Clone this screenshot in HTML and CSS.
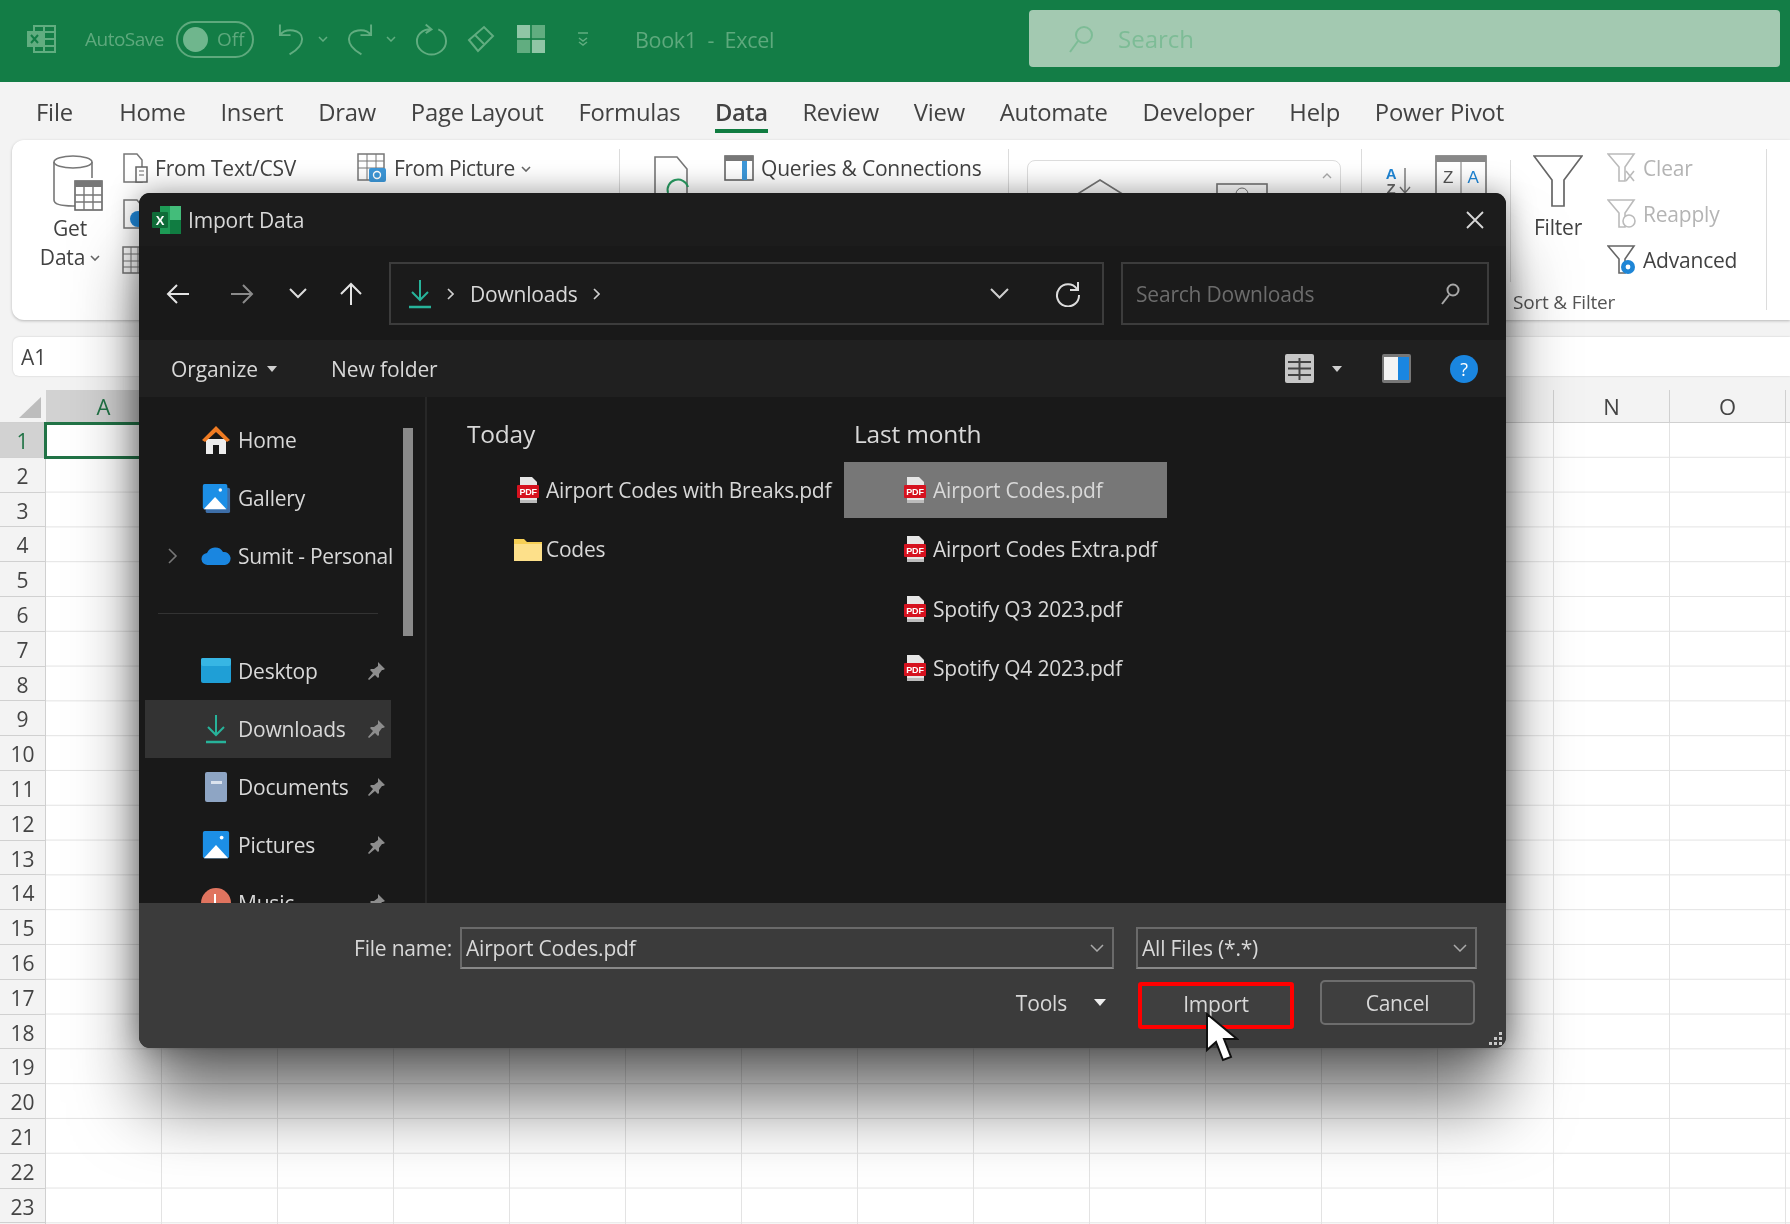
FILE: index.html
```html
<!DOCTYPE html>
<html>
<head>
<meta charset="utf-8">
<title>Book1 - Excel</title>
<link rel="stylesheet" href="styles.css">
</head>
<body>
<svg class="defs" width="0" height="0">
  <symbol id="pdf" viewBox="0 0 22 26">
    <path d="M3 0h12l5 5v21H3z" fill="#e6e6e6"/>
    <rect x="3" y="23" width="17" height="3" fill="#bbb"/>
    <rect x="0" y="8" width="22" height="13" rx="1" fill="#d6121f"/>
    <text x="11" y="18" text-anchor="middle" class="pdf-label">PDF</text>
  </symbol>
  <symbol id="pin" viewBox="0 0 20 20">
    <path d="M12 1l7 7-2 1-1 0-3 4 0 3-1 1-3-3-6 5-1-1 5-6-3-3 1-1 3 0 4-3 0-1z" fill="#8d8d8d"/>
  </symbol>
  <symbol id="tile" viewBox="0 0 30 32">
    <rect x="1" y="1" width="28" height="29" rx="2" fill="#1c8fe6"/>
    <path d="M2 30l13-14 13 14z" fill="#fff"/>
    <circle cx="21" cy="8" r="2" fill="#fff"/>
  </symbol>
  <symbol id="chev" viewBox="0 0 10 6">
    <path d="M1 1l4 4 4-4" fill="none" stroke="#666" stroke-width="1.6"/>
  </symbol>
</svg>

<div class="app">
  <!-- green title bar -->
  <div class="titlebar">
    <svg class="t-excel" viewBox="0 0 30 30" width="30" height="30"><rect x="8" y="2" width="21" height="26" fill="none" stroke="#61ad80" stroke-width="2"/><path d="M8 8h21M8 15h21M8 22h21M18 2v26" stroke="#61ad80" stroke-width="2"/><rect x="1" y="7" width="16" height="16" fill="#61ad80"/><path d="M5 11l7 8M12 11l-7 8" stroke="#137d46" stroke-width="2"/></svg>
    <span class="t-autosave">AutoSave</span>
    <span class="toggle"><i></i><span>Off</span></span>
    <svg class="t-undo" viewBox="0 0 28 36" width="27" height="36"><path d="M2 3v11h11M2 14C8 6 25 8 25 18c0 6-6 12-13 16" fill="none" stroke="#61ad80" stroke-width="2"/></svg>
    <svg class="t-chev" viewBox="0 0 10 6" width="10" height="6"><path d="M1 1l4 4 4-4" fill="none" stroke="#61ad80" stroke-width="1.5"/></svg>
    <svg class="t-redo" viewBox="0 0 28 36" width="27" height="36"><path d="M26 3v11H15M26 14C20 6 3 8 3 18c0 6 6 12 13 16" fill="none" stroke="#61ad80" stroke-width="2"/></svg>
    <svg class="t-chev" viewBox="0 0 10 6" width="10" height="6"><path d="M1 1l4 4 4-4" fill="none" stroke="#61ad80" stroke-width="1.5"/></svg>
    <svg class="t-repeat" viewBox="0 0 34 36" width="33" height="36"><path d="M11 3l6 5-6 4M16 8C7 8 2 14 2 20c0 8 7 14 15 14s15-6 15-14c0-5-3-10-8-12" fill="none" stroke="#61ad80" stroke-width="2"/></svg>
    <svg class="t-eraser" viewBox="0 0 28 28" width="28" height="28"><path d="M2 15L17 2l9 9-15 15z" fill="none" stroke="#61ad80" stroke-width="2"/><path d="M8 10l9 9" stroke="#61ad80" stroke-width="2"/></svg>
    <svg class="t-form" viewBox="0 0 28 28" width="28" height="28"><rect width="28" height="28" fill="#61ad80"/><path d="M14 0v28M0 14h28" stroke="#137d46" stroke-width="1.5"/><rect width="13" height="13" fill="#8fc6a6"/><rect x="15" y="15" width="13" height="13" fill="#8fc6a6"/></svg>
    <svg class="t-qat" viewBox="0 0 12 14" width="12" height="14"><path d="M1 1h10M2 6l4 3 4-3M2 10l4 3 4-3" fill="none" stroke="#61ad80" stroke-width="1.5"/></svg>
    <span class="t-name">Book1 &nbsp;-&nbsp; Excel</span>
    <div class="t-search">
      <svg viewBox="0 0 26 30" width="26" height="30"><circle cx="16" cy="11" r="8" fill="none" stroke="#7dbc96" stroke-width="2"/><path d="M10 17L2 28" stroke="#7dbc96" stroke-width="2"/></svg>
      <span>Search</span>
    </div>
  </div>

  <!-- tabs -->
  <div class="tabs">
    <span class="tab">File</span>
    <span class="tab tab-home">Home</span>
    <span class="tab">Insert</span>
    <span class="tab">Draw</span>
    <span class="tab">Page Layout</span>
    <span class="tab">Formulas</span>
    <span class="tab active">Data</span>
    <span class="tab">Review</span>
    <span class="tab">View</span>
    <span class="tab">Automate</span>
    <span class="tab">Developer</span>
    <span class="tab">Help</span>
    <span class="tab">Power Pivot</span>
  </div>

  <!-- ribbon -->
  <div class="ribbon">
    <div class="rgroup rg-get">
      <div class="big-btn getdata">
        <svg viewBox="0 0 50 56" width="50" height="56"><ellipse cx="20" cy="7" rx="19" ry="6" fill="#fff" stroke="#777" stroke-width="1.6"/><path d="M1 7v38c0 4 8 6 19 6h6M39 7v16" fill="none" stroke="#777" stroke-width="1.6"/><rect x="22" y="26" width="27" height="29" fill="#fff" stroke="#666" stroke-width="1.6"/><rect x="22" y="26" width="27" height="6" fill="#777"/><path d="M22 40h27M22 47h27M31 32v23M40 32v23" stroke="#777" stroke-width="1.4"/></svg>
        <span>Get</span>
        <span class="get-line">Data <svg class="chev-s" width="10" height="6"><use href="#chev"/></svg></span>
      </div>
      <div class="small-col c1">
        <div class="small"><svg viewBox="0 0 26 30" width="26" height="30"><path d="M2 1h13l5 6v22H2z" fill="#fff" stroke="#777" stroke-width="1.5"/><rect x="14" y="14" width="11" height="15" fill="#fff" stroke="#666" stroke-width="1.5"/><path d="M17 18h5M17 22h5" stroke="#666"/></svg>From Text/CSV</div>
        <div class="small"><svg viewBox="0 0 26 30" width="26" height="30"><path d="M2 1h13l5 6v22H2z" fill="#fff" stroke="#777" stroke-width="1.5"/><circle cx="16" cy="20" r="8" fill="#1f86d6"/></svg></div>
        <div class="small"><svg viewBox="0 0 26 30" width="26" height="30"><rect x="1" y="2" width="22" height="26" fill="#fff" stroke="#777" stroke-width="1.5"/><path d="M1 9h22M1 16h22M1 22h22M9 2v26M16 2v26" stroke="#777"/></svg></div>
      </div>
      <div class="small-col c2">
        <div class="small"><svg viewBox="0 0 30 30" width="30" height="30"><rect x="1" y="1" width="26" height="26" fill="#fff" stroke="#777" stroke-width="1.5"/><path d="M1 8h26M1 15h26M10 1v26M19 1v26" stroke="#777"/><rect x="12" y="15" width="17" height="14" rx="2" fill="#3d97d8"/><circle cx="20" cy="22" r="3.5" fill="none" stroke="#fff" stroke-width="1.4"/></svg><span class="narrow">From Picture</span><svg class="chev-s" width="10" height="6"><use href="#chev"/></svg></div>
      </div>
    </div>
    <div class="rgroup rg-query">
      <svg class="q-big" viewBox="0 0 42 42" width="42" height="42"><path d="M1 2h22l10 12v26H1z" fill="#fff" stroke="#777" stroke-width="1.6"/><path d="M14 38a10 10 0 0 1 20-6" fill="none" stroke="#2a9d63" stroke-width="2"/></svg>
      <div class="small-col">
        <div class="small"><svg viewBox="0 0 30 26" width="30" height="26"><rect x="1" y="1" width="28" height="24" fill="#fff" stroke="#666" stroke-width="1.6"/><rect x="1" y="1" width="28" height="5" fill="#777"/><rect x="18" y="6" width="5" height="19" fill="#3d97d8"/></svg>Queries &amp; Connections</div>
      </div>
    </div>
    <div class="rgroup rg-types">
      <div class="types-box">
        <svg class="ty-bank" viewBox="0 0 50 16" width="50" height="16"><path d="M1 16L25 1l24 15" fill="none" stroke="#777" stroke-width="1.6"/></svg>
        <svg class="ty-money" viewBox="0 0 52 12" width="52" height="12"><rect x="1" y="1" width="50" height="20" fill="none" stroke="#777" stroke-width="1.6"/><circle cx="26" cy="11" r="6" fill="none" stroke="#777"/></svg>
        <svg class="ty-caret" viewBox="0 0 10 6" width="10" height="6"><path d="M1 5l4-4 4 4" fill="none" stroke="#aaa" stroke-width="1.4"/></svg>
      </div>
    </div>
    <div class="rgroup rg-sort">
      <div class="sort-top">
        <svg class="az" viewBox="0 0 30 28" width="30" height="28"><text x="7" y="12" class="az-a">A</text><text x="7" y="27" class="az-z">Z</text><path d="M21 1v25M16 20l5 6 5-6" fill="none" stroke="#777" stroke-width="1.4"/></svg>
        <svg class="sort-big" viewBox="0 0 52 40" width="52" height="40"><rect x="1" y="1" width="50" height="50" fill="#fff" stroke="#777" stroke-width="1.6"/><rect x="1" y="1" width="50" height="6" fill="#888"/><path d="M26 7v40" stroke="#777"/><text x="13" y="28" class="sort-z">Z</text><text x="38" y="28" class="sort-a">A</text></svg>
        <div class="sort-sep"></div>
        <div class="big-btn filter">
          <svg viewBox="0 0 50 52" width="50" height="52"><path d="M1 1h48L31 25v26H19V25z" fill="#fff" stroke="#666" stroke-width="1.7"/></svg>
          <span>Filter</span>
        </div>
        <div class="small-col c3">
          <div class="small dim"><svg viewBox="0 0 30 30" width="30" height="30"><path d="M1 1h26L18 14v14h-6V14z" fill="#fff" stroke="#bbb" stroke-width="1.6"/><path d="M19 18l8 10M27 18l-8 10" stroke="#bbb" stroke-width="1.6"/></svg>Clear</div>
          <div class="small dim"><svg viewBox="0 0 30 30" width="30" height="30"><path d="M1 1h26L18 14v14h-6V14z" fill="#fff" stroke="#bbb" stroke-width="1.6"/><circle cx="22" cy="22" r="6" fill="#fff" stroke="#bbb" stroke-width="1.6"/></svg>Reapply</div>
          <div class="small"><svg viewBox="0 0 30 30" width="30" height="30"><path d="M1 1h26L18 14v14h-6V14z" fill="#fff" stroke="#666" stroke-width="1.6"/><circle cx="21" cy="22" r="7" fill="#1f86d6"/><circle cx="21" cy="22" r="2.4" fill="#fff"/></svg>Advanced</div>
        </div>
      </div>
      <div class="rg-label">Sort &amp; Filter</div>
    </div>
  </div>

  <!-- name box and formula bar -->
  <div class="formula"><span class="namebox">A1</span></div>

  <!-- sheet -->
  <div class="sheet">
    <div class="col-head">
      <span class="corner"><svg viewBox="0 0 22 21" width="22" height="21"><path d="M22 0v21H0z" fill="#bdbdbd"/></svg></span>
      <span class="ch sel">A</span><span class="ch"></span><span class="ch"></span><span class="ch"></span><span class="ch"></span><span class="ch"></span><span class="ch"></span><span class="ch"></span><span class="ch"></span><span class="ch"></span><span class="ch"></span><span class="ch"></span><span class="ch"></span><span class="ch">N</span><span class="ch">O</span>
    </div>
    <div class="sheet-body">
      <div class="row-head">
        <span class="sel">1</span><span>2</span><span>3</span><span>4</span><span>5</span><span>6</span><span>7</span><span>8</span><span>9</span><span>10</span><span>11</span><span>12</span><span>13</span><span>14</span><span>15</span><span>16</span><span>17</span><span>18</span><span>19</span><span>20</span><span>21</span><span>22</span><span>23</span>
      </div>
      <div class="cells"><div class="active-cell"></div></div>
    </div>
  </div>

  <!-- file dialog -->
  <div class="dialog">
    <div class="d-title">
      <svg viewBox="0 0 30 28" width="30" height="28"><rect x="8" y="0" width="21" height="28" fill="#1d9a55"/><rect x="18" y="0" width="11" height="14" fill="#43bd7a"/><rect x="18" y="14" width="11" height="14" fill="#107c41"/><rect x="0" y="6" width="16" height="16" rx="1" fill="#0f6b38"/><text x="8" y="19" text-anchor="middle" class="x-label">X</text></svg>
      <span>Import Data</span>
      <svg class="d-close" viewBox="0 0 18 18" width="18" height="18"><path d="M1 1l16 16M17 1L1 17" stroke="#d8d8d8" stroke-width="1.8"/></svg>
    </div>

    <div class="d-nav">
      <span class="nb nb-wide"><svg viewBox="0 0 24 22" width="24" height="22"><path d="M23 11H2M11 2l-9 9 9 9" fill="none" stroke="#e4e4e4" stroke-width="2"/></svg></span>
      <span class="nb nb-wide"><svg viewBox="0 0 24 22" width="24" height="22"><path d="M1 11h21M13 2l9 9-9 9" fill="none" stroke="#8b8b8b" stroke-width="2"/></svg></span>
      <span class="nb nb-chev"><svg viewBox="0 0 18 11" width="18" height="11"><path d="M1 1l8 8 8-8" fill="none" stroke="#dcdcdc" stroke-width="2"/></svg></span>
      <span class="nb nb-up"><svg viewBox="0 0 24 24" width="24" height="24"><path d="M12 23V2M2 12L12 2l10 10" fill="none" stroke="#e4e4e4" stroke-width="2"/></svg></span>
      <div class="address">
        <svg viewBox="0 0 22 30" width="22" height="30"><path d="M11 1v20M3 13l8 8 8-8" fill="none" stroke="#27b39a" stroke-width="2"/><path d="M0 28h22" stroke="#27b39a" stroke-width="2.6"/></svg>
        <svg class="crumb" viewBox="0 0 7 12" width="7" height="12"><path d="M1 1l5 5-5 5" fill="none" stroke="#cfcfcf" stroke-width="1.6"/></svg>
        <span>Downloads</span>
        <svg class="crumb" viewBox="0 0 7 12" width="7" height="12"><path d="M1 1l5 5-5 5" fill="none" stroke="#cfcfcf" stroke-width="1.6"/></svg>
        <svg class="addr-drop" viewBox="0 0 19 11" width="19" height="11"><path d="M1 1l8.500 8.500L18 1" fill="none" stroke="#cfcfcf" stroke-width="2"/></svg>
        <svg class="addr-refresh" viewBox="0 0 26 26" width="26" height="26"><path d="M22 8A11 11 0 1 0 24 14" fill="none" stroke="#dcdcdc" stroke-width="2"/><path d="M23 1v8h-8" fill="none" stroke="#dcdcdc" stroke-width="2"/></svg>
      </div>
      <div class="d-search">
        <span>Search Downloads</span>
        <svg viewBox="0 0 20 22" width="20" height="22"><circle cx="13" cy="7" r="5.500" fill="none" stroke="#a8a8a8" stroke-width="2"/><path d="M9 12l-7 9" stroke="#a8a8a8" stroke-width="2"/></svg>
      </div>
    </div>

    <div class="d-tools">
      <span class="tool-text">Organize</span><i class="caret"></i>
      <span class="tool-text new-folder">New folder</span>
      <svg class="view-icon" viewBox="0 0 29 29" width="29" height="29"><rect width="29" height="29" rx="2" fill="#c6c6c6"/><path d="M3 8h23M3 14.500h23M3 21h23M14.500 4v22" stroke="#444" stroke-width="2"/></svg>
      <i class="caret view-caret"></i>
      <svg class="pane-icon" viewBox="0 0 29 29" width="29" height="29"><rect width="29" height="29" rx="2" fill="#777"/><rect x="2" y="3" width="25" height="23" fill="#f4f4f4"/><rect x="16" y="3" width="11" height="23" fill="#1a86e0"/></svg>
      <span class="help">?</span>
    </div>

    <div class="d-body">
      <div class="side">
        <div class="side-list">
          <div class="side-row"><span class="twist"></span>
            <svg class="side-ic" viewBox="0 0 30 30" width="30" height="30"><path d="M5 14v15h7v-9h6v9h7V14z" fill="#ededed"/><path d="M15 1L1 15l3 2L15 7l11 10 3-2z" fill="#ef7b22"/></svg>
            <span>Home</span></div>
          <div class="side-row"><span class="twist"></span>
            <svg class="side-ic" viewBox="0 0 30 32" width="30" height="30"><rect x="4" y="5" width="26" height="27" rx="2" fill="#3d6ea8"/><use href="#tile" width="28" height="30"/></svg>
            <span>Gallery</span></div>
          <div class="side-row"><span class="twist"><svg viewBox="0 0 10 16" width="10" height="16"><path d="M1 1l7 7-7 7" fill="none" stroke="#777" stroke-width="1.6"/></svg></span>
            <svg class="side-ic" viewBox="0 0 30 20" width="30" height="20"><path d="M7 19a6 6 0 0 1-1-12A9 9 0 0 1 22 6a6.500 6.500 0 0 1 2 13z" fill="#1a86e0"/></svg>
            <span class="tight">Sumit - Personal</span></div>
          <div class="side-div"></div>
          <div class="side-row"><span class="twist"></span>
            <svg class="side-ic" viewBox="0 0 30 26" width="30" height="26"><rect width="30" height="25" rx="2" fill="#1f9fd6"/><rect width="30" height="8" rx="2" fill="#37b6e4"/></svg>
            <span>Desktop</span><svg class="pin" width="20" height="20"><use href="#pin"/></svg></div>
          <div class="side-row on"><span class="twist"></span>
            <svg class="side-ic" viewBox="0 0 22 30" width="22" height="30"><path d="M11 1v20M3 13l8 8 8-8" fill="none" stroke="#27b39a" stroke-width="2"/><path d="M1 28h20" stroke="#27b39a" stroke-width="2.6"/></svg>
            <span>Downloads</span><svg class="pin" width="20" height="20"><use href="#pin"/></svg></div>
          <div class="side-row"><span class="twist"></span>
            <svg class="side-ic" viewBox="0 0 22 30" width="22" height="30"><rect width="22" height="30" rx="2" fill="#8ea5c4"/><rect x="6" y="9" width="11" height="3" fill="#dbe3ee"/></svg>
            <span>Documents</span><svg class="pin" width="20" height="20"><use href="#pin"/></svg></div>
          <div class="side-row"><span class="twist"></span>
            <svg class="side-ic" viewBox="0 0 30 32" width="28" height="30"><use href="#tile"/></svg>
            <span>Pictures</span><svg class="pin" width="20" height="20"><use href="#pin"/></svg></div>
          <div class="side-row"><span class="twist"></span>
            <svg class="side-ic" viewBox="0 0 30 30" width="30" height="30"><circle cx="15" cy="15" r="15" fill="#e0745f"/><path d="M14 6v12" stroke="#fff" stroke-width="2"/></svg>
            <span>Music</span><svg class="pin" width="20" height="20"><use href="#pin"/></svg></div>
        </div>
        <div class="scroll-thumb"></div>
      </div>

      <div class="files">
        <div class="file-col col-today">
          <div class="group-name">Today</div>
          <div class="file"><span class="file-ic"><svg width="22" height="26"><use href="#pdf"/></svg></span>Airport Codes with Breaks.pdf</div>
          <div class="file"><span class="file-ic"><svg viewBox="0 0 28 24" width="28" height="24"><path d="M0 2h10l3 3h15v19H0z" fill="#f6cf55"/><rect y="7" width="28" height="17" fill="#fde08a"/></svg></span>Codes</div>
        </div>
        <div class="file-col col-month">
          <div class="group-name">Last month</div>
          <div class="file picked"><span class="file-ic"><svg width="22" height="26"><use href="#pdf"/></svg></span>Airport Codes.pdf</div>
          <div class="file"><span class="file-ic"><svg width="22" height="26"><use href="#pdf"/></svg></span>Airport Codes Extra.pdf</div>
          <div class="file"><span class="file-ic"><svg width="22" height="26"><use href="#pdf"/></svg></span>Spotify Q3 2023.pdf</div>
          <div class="file"><span class="file-ic"><svg width="22" height="26"><use href="#pdf"/></svg></span>Spotify Q4 2023.pdf</div>
        </div>
      </div>
    </div>

    <div class="d-foot">
      <div class="foot-row">
        <label class="fname-label">File name:</label>
        <div class="field fname"><span>Airport Codes.pdf</span><svg viewBox="0 0 14 8" width="14" height="8"><path d="M1 1l6 6 6-6" fill="none" stroke="#aaa" stroke-width="1.5"/></svg></div>
        <div class="field ftype"><span>All Files (*.*)</span><svg viewBox="0 0 14 8" width="14" height="8"><path d="M1 1l6 6 6-6" fill="none" stroke="#aaa" stroke-width="1.5"/></svg></div>
      </div>
      <div class="foot-row foot-btns">
        <span class="tools">Tools</span><i class="caret tools-caret"></i>
        <button class="btn btn-import">Import</button>
        <button class="btn btn-cancel">Cancel</button>
      </div>
      <svg class="grip" viewBox="0 0 16 16" width="16" height="16"><path d="M12 2h3v3h-3zM12 7h3v3h-3zM7 7h3v3H7zM12 12h3v3h-3zM7 12h3v3H7zM2 12h3v3H2z" fill="#c8c8c8"/></svg>
    </div>
  </div>

  <svg class="cursor" viewBox="0 0 34 50" width="34" height="50"><path d="M2 1v36l9-8 7 18 8-3-7-18h13z" fill="#fff" stroke="#111" stroke-width="2"/></svg>
</div>
</body>
</html>
```
FILE: styles.css
```css
* {
  box-sizing: border-box;
}
html, body {
  margin: 0;
  padding: 0;
  background: linear-gradient(#137d46 82px, #f3f3f3 82px);
}
body {
  font-family: "Open Sans", "Noto Sans", sans-serif;
  overflow: hidden;
}
.defs {
  position: absolute;
}
.pdf-label {
  font: bold 9px "Liberation Sans", sans-serif;
  fill: #fff;
}
.x-label {
  font: bold 13px "Liberation Sans", sans-serif;
  fill: #fff;
}
.app {
  position: relative;
  width: 1790px;
  height: 1224px;
  overflow: hidden;
  background: #f3f3f3;
  filter: blur(0.65px);
  display: flex;
  flex-direction: column;
}
svg {
  flex: none;
  display: block;
}

/* Title bar */
.titlebar {
  height: 82px;
  flex: none;
  background: #137d46;
  display: flex;
  align-items: center;
  padding: 0 0 4px 26px;
  color: #5ea97d;
  font-size: 19px;
}
.t-excel { margin-right: 29px; }
.t-autosave { width: 91px; letter-spacing: -0.5px; }
.toggle {
  width: 78px;
  height: 37px;
  border: 2px solid #5ea97d;
  border-radius: 19px;
  display: flex;
  align-items: center;
  padding-left: 5px;
  gap: 9px;
}
.toggle i {
  width: 25px;
  height: 25px;
  border-radius: 50%;
  background: #6fb68d;
}
.t-undo { margin-left: 24px; }
.t-chev { margin: 0 14px 0 13px; }
.t-redo { margin-left: 4px; }
.t-repeat { margin-left: 5px; }
.t-eraser { margin-left: 19px; }
.t-form { margin-left: 22px; }
.t-qat { margin-left: 32px; }
.t-name { margin-left: 46px; width: 394px; font-size: 21.5px; white-space: nowrap; letter-spacing: -0.3px; }
.t-search {
  width: 751px;
  height: 57px;
  margin-top: -1px;
  border-radius: 4px;
  background: #a3c9b1;
  display: flex;
  align-items: center;
  padding-left: 39px;
  gap: 24px;
  color: #7dbc96;
  font-size: 24px;
}

/* Tabs */
.tabs {
  height: 58px;
  flex: none;
  display: flex;
  align-items: center;
  gap: 34.800px;
  padding: 1px 0 0 36px;
  font-size: 23.800px;
  color: #424242;
  letter-spacing: -0.2px;
}
.tab { white-space: nowrap; }
.tab-home { margin-left: 11.500px; }
.tab.active {
  position: relative;
  font-weight: 600;
  letter-spacing: -0.5px;
}
.tab.active::after {
  content: "";
  position: absolute;
  left: 0;
  right: 0;
  bottom: -5px;
  height: 4px;
  background: #107c41;
}

/* Ribbon */
.ribbon {
  height: 180px;
  flex: none;
  margin-left: 12px;
  background: #fff;
  border-radius: 12px 0 0 12px;
  box-shadow: 0 1px 3px rgba(0,0,0,.25);
  display: flex;
  font-size: 21px;
  color: #424242;
  letter-spacing: -0.2px;
  white-space: nowrap;
}
.rgroup {
  position: relative;
  display: flex;
  padding-top: 5px;
}
.rgroup::after {
  content: "";
  position: absolute;
  right: 0;
  top: 9px;
  bottom: 10px;
  width: 1px;
  background: #dcdcdc;
}
.rg-get { width: 608px; }
.rg-query { width: 389px; padding-left: 34px; gap: 28px; }
.rg-types { width: 353px; }
.rg-sort { width: 405px; flex-direction: column; }
.big-btn {
  display: flex;
  flex-direction: column;
  align-items: center;
  line-height: 29px;
}
.getdata { width: 110px; padding: 10px 0 0 6px; }
.getdata svg { margin: 0 0 3px 16px; }
.getdata .get-line { display: flex; align-items: center; gap: 5px; }
.getdata .chev-s { margin: 0; }
.filter { width: 50px; padding-top: 10px; margin-left: 22px; }
.filter svg { margin-bottom: 6px; }
.small-col {
  display: flex;
  flex-direction: column;
}
.small {
  height: 46px;
  display: flex;
  align-items: center;
  gap: 7px;
}
.narrow { letter-spacing: -0.4px; }
.chev-s { margin: 2px 0 0 -1px; }
.c1 { width: 235px; }
.dim { color: #b4b4b4; }
.c3 { margin-left: 24px; }
.c3 .small { gap: 6px; }
.q-big { margin-top: 10px; }
.types-box {
  position: relative;
  width: 314px;
  height: 80px;
  margin: 15px 0 0 18px;
  border: 1px solid #ddd;
  border-radius: 8px 8px 0 0;
}
.ty-bank { position: absolute; left: 47px; top: 18px; }
.ty-money { position: absolute; left: 188px; top: 22px; }
.ty-caret { position: absolute; right: 8px; top: 12px; }
.sort-top {
  display: flex;
  align-items: flex-start;
  padding-left: 22px;
}
.az { margin-top: 22px; overflow: visible; }
.az-a, .az-z { font: bold 15px "Liberation Sans", sans-serif; text-anchor: middle; fill: #1f86d6; }
.az-z { fill: #666; }
.sort-big { margin: 10px 0 0 21px; }
.sort-z, .sort-a { font: 17px "Liberation Sans", sans-serif; text-anchor: middle; fill: #555; }
.sort-a { fill: #1f86d6; }
.sort-sep {
  width: 1px;
  height: 122px;
  margin: 15px 0 0 23px;
  background: #dcdcdc;
}
.rg-label {
  margin: 6px 0 0 151px;
  font-size: 19px;
  color: #555;
}

/* Formula bar */
.formula {
  height: 39px;
  flex: none;
  margin: 17px 0 0 13px;
  background: #fff;
  border-radius: 6px 0 0 6px;
  box-shadow: 0 0 2px rgba(0,0,0,.2);
  display: flex;
  align-items: center;
  padding-left: 8px;
}
.namebox {
  font-size: 21px;
  color: #444;
}

/* Sheet */
.sheet {
  margin-top: 14px;
  flex: 1;
  display: flex;
  flex-direction: column;
  background: #fff;
}
.col-head {
  display: flex;
  height: 33px;
  flex: none;
  background: #f3f3f3;
  box-shadow: inset 0 -1px 0 #d0d0d0;
}
.corner {
  width: 46px;
  flex: none;
  padding: 7px 0 0 19px;
}
.ch {
  width: 116px;
  flex: none;
  text-align: center;
  font-size: 22px;
  line-height: 33px;
  color: #444;
  border-right: 1px solid #d0d0d0;
}
.ch.sel {
  background: #d2d2d2;
  color: #217346;
}
.sheet-body {
  flex: 1;
  display: flex;
}
.row-head {
  width: 46px;
  flex: none;
  display: flex;
  flex-direction: column;
  background: #f3f3f3;
  border-right: 1px solid #d0d0d0;
}
.row-head span {
  height: 34.8px;
  flex: none;
  text-align: center;
  font-size: 21px;
  line-height: 36px;
  color: #444;
  border-bottom: 1px solid #d0d0d0;
}
.row-head .sel {
  background: #d2d2d2;
  color: #217346;
}
.cells {
  position: relative;
  flex: 1;
  background-image:
    linear-gradient(to right, #e3e3e3 1px, transparent 1px),
    linear-gradient(to bottom, #e3e3e3 1px, transparent 1px);
  background-size: 116px 34.8px;
  background-position: -1px -1px;
}
.active-cell {
  position: absolute;
  left: -2px;
  top: -1px;
  width: 118px;
  height: 37px;
  border: 3px solid #217346;
}

/* Import dialog */
.dialog {
  position: absolute;
  left: 139px;
  top: 193px;
  width: 1367px;
  height: 855px;
  border-radius: 11px;
  overflow: hidden;
  background: #191919;
  color: #d8d8d8;
  font-size: 21px;
  letter-spacing: -0.2px;
  display: flex;
  flex-direction: column;
  white-space: nowrap;
  z-index: 2;
}
.app::before {
  content: "";
  position: absolute;
  left: 139px;
  top: 193px;
  width: 1367px;
  height: 855px;
  border-radius: 11px;
  box-shadow: 0 0 30px rgba(0,0,0,.4), 0 60px 70px -5px rgba(0,0,0,.55);
  z-index: 1;
}
.d-title {
  height: 53px;
  flex: none;
  background: #1c1c1c;
  display: flex;
  align-items: center;
  padding-left: 13px;
  gap: 6px;
}
.d-close { margin-left: auto; margin-right: 22px; }
.d-nav {
  height: 94px;
  flex: none;
  display: flex;
  padding: 16px 0 0 7px;
}
.nb {
  height: 63px;
  display: flex;
  align-items: center;
  justify-content: center;
}
.nb-wide { width: 64px; }
.nb-chev { width: 48px; }
.nb-up { width: 58px; margin-right: 9px; }
.address, .d-search {
  height: 63px;
  border: 2px solid #3c3c3c;
  background: #1b1b1b;
  display: flex;
  align-items: center;
}
.address {
  width: 715px;
  padding-left: 18px;
}
.crumb { margin: 0 16px 0 16px; }
.address span + .crumb { margin-left: 15px; }
.addr-drop { margin-left: auto; }
.addr-refresh { margin: 0 21px 0 46px; }
.d-search {
  width: 368px;
  margin-left: 17px;
  padding: 0 27px 0 13px;
  justify-content: space-between;
  color: #6c6c6c;
}
.d-tools {
  height: 57px;
  flex: none;
  background: #202020;
  display: flex;
  align-items: center;
  padding-left: 32px;
  letter-spacing: -0.1px;
}
.caret {
  width: 0;
  height: 0;
  border-left: 5px solid transparent;
  border-right: 5px solid transparent;
  border-top: 6px solid #cfcfcf;
  margin-left: 9px;
}
.new-folder { margin-left: 54px; }
.view-icon { margin-left: auto; }
.view-caret { margin: 0 40px 0 18px; }
.help {
  width: 28px;
  height: 28px;
  margin: 0 28px 0 39px;
  border-radius: 50%;
  background: #1a86e0;
  color: #fff;
  font-size: 18px;
  line-height: 28px;
  text-align: center;
}
.d-body {
  height: 506px;
  flex: none;
  display: flex;
  overflow: hidden;
}
.side {
  width: 288px;
  flex: none;
  border-right: 2px solid #272727;
  display: flex;
}
.side-list {
  width: 264px;
  flex: none;
  padding: 14px 0 0 6px;
  letter-spacing: -0.2px;
}
.tight { letter-spacing: -0.3px; }
.side-row {
  width: 246px;
  height: 58px;
  display: flex;
  align-items: center;
  padding-left: 20px;
}
.side-row.on { background: #333; }
.twist { width: 36px; flex: none; padding-left: 3px; }
.side-ic { width: 30px; margin-right: 7px; }
.pin { margin-left: auto; margin-right: 5px; }
.side-div {
  width: 220px;
  height: 57px;
  margin-left: 13px;
  background: linear-gradient(#333, #333) no-repeat 0 28px / 100% 1px;
}
.scroll-thumb {
  width: 10px;
  height: 208px;
  margin-top: 31px;
  background: #8a8a8a;
}
.files { display: flex; }
.file-col { flex: none; }
.col-today { width: 417px; }
.col-month { width: 323px; }
.group-name {
  height: 34px;
  margin: 20px 0 11px;
  font-size: 24.5px;
  line-height: 34px;
}
.col-today .group-name { padding-left: 40px; }
.col-month .group-name { padding-left: 10px; }
.file {
  height: 56px;
  margin-bottom: 3.4px;
  display: flex;
  align-items: center;
}
.col-today .file { padding-left: 86px; letter-spacing: -0.25px; }
.col-month .file { padding-left: 56px; }
.file.picked { background: #777; }
.file-ic {
  width: 30px;
  margin-right: 3px;
  display: flex;
  justify-content: center;
}
.d-foot {
  position: relative;
  flex: 1;
  background: #3b3b3b;
  padding-top: 24px;
}
.foot-row { display: flex; }
.fname-label {
  width: 313px;
  margin-right: 8px;
  line-height: 42px;
  text-align: right;
}
.field {
  height: 42px;
  border: 2px solid #6a6a6a;
  border-bottom-color: #888;
  display: flex;
  align-items: center;
  justify-content: space-between;
  padding: 0 8px 0 4px;
}
.fname { width: 654px; margin-right: 22px; }
.ftype { width: 341px; }
.foot-btns {
  margin-top: 11px;
  justify-content: flex-end;
  padding-right: 31px;
  align-items: flex-start;
}
.tools { line-height: 47px; }
.tools-caret { margin: 19px 32px 0 27px; border-left-width: 6px; border-right-width: 6px; border-top: 7px solid #eee; }
.btn {
  font: inherit;
  letter-spacing: inherit;
  color: #d8d8d8;
  background: #3f3f3f;
  padding: 0;
}
.btn-import {
  width: 156px;
  height: 47px;
  margin: 2px 26px 0 0;
  padding-bottom: 4px;
  border: 4px solid #f00;
  border-radius: 3px;
}
.btn-cancel {
  width: 155px;
  height: 45px;
  border: 2px solid #6d6d6d;
  border-radius: 5px;
}
.grip {
  position: absolute;
  right: 3px;
  bottom: 2px;
}
.cursor {
  position: absolute;
  left: 1205px;
  top: 1013px;
  z-index: 3;
}
```
